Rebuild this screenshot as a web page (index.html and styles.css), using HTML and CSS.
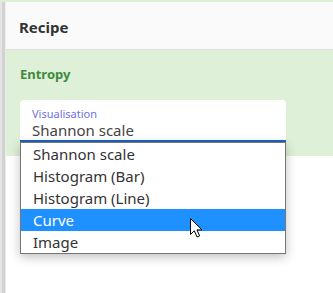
FILE: index.html
```html
<!DOCTYPE html>
<html lang="en">
<head>
    <meta charset="UTF-8">
    <title>Recipe</title>
    <link rel="stylesheet" href="styles.css">
</head>
<body>
    <div class="topbar"></div>
    <div class="app">
        <div class="gutter"></div>
        <div class="main">
            <div class="header">Recipe</div>
            <div class="operation">
                <div class="op-title">Entropy</div>
                <div class="field">
                    <label class="field-label">Visualisation</label>
                    <div class="field-value">Shannon scale</div>
                    <ul class="options">
                        <li>Shannon scale</li>
                        <li>Histogram (Bar)</li>
                        <li>Histogram (Line)</li>
                        <li class="active">Curve</li>
                        <li>Image</li>
                    </ul>
                    <svg class="cursor" width="14" height="21" viewBox="0 0 14 21">
                        <path d="M0.5 0.5 L0.5 16.5 L4.3 12.8 L7 19 L9.6 17.9 L7 11.9 L12 11.9 Z" fill="#fff" stroke="#000" stroke-width="1" stroke-linejoin="miter"/>
                    </svg>
                </div>
            </div>
            <div class="rest"></div>
        </div>
    </div>
</body>
</html>
```
FILE: styles.css
```css
body {
    margin: 0;
    font-family: "Noto Sans", "Open Sans", sans-serif;
    background-color: #fff;
    color: #333;
}
.topbar {
    height: 2px;
    background-color: #dcefd6;
}
.app {
    display: flex;
    height: 291px;
}
.gutter {
    width: 6px;
    background: linear-gradient(to right, #e4e4e4 0, #e4e4e4 2px, #d2d2d2 2px, #d2d2d2 5px, #ececec 5px);
}
.main {
    flex: 1;
    display: flex;
    flex-direction: column;
}
.header {
    height: 48px;
    line-height: 46px;
    padding-top: 2px;
    padding-left: 13px;
    box-sizing: border-box;
    background-color: #fafafa;
    border-bottom: 1px solid #ddd;
    font-weight: bold;
    font-size: 15px;
    color: #333;
}
.operation {
    background-color: #dff0d8;
    height: 106px;
    padding-left: 14px;
}
.op-title {
    font-weight: bold;
    font-size: 13px;
    color: #3d8b3d;
    padding-top: 15px;
    height: 34px;
    box-sizing: border-box;
}
.field {
    position: relative;
    width: 266px;
    height: 42px;
    margin-top: 16px;
    box-sizing: border-box;
    background-color: #fff;
    border-radius: 4px 4px 0 0;
    border-bottom: 2px solid #1b63c1;
    padding: 7px 0 0 12px;
    box-shadow: 0 3px 4px -3px rgba(0, 0, 0, 0.15);
}
.field-label {
    display: block;
    font-size: 11px;
    line-height: 13px;
    color: #6f72e2;
}
.field-value {
    font-size: 15px;
    line-height: 20px;
    color: #444;
}
.options {
    position: absolute;
    top: 42px;
    left: 0;
    width: 266px;
    box-sizing: border-box;
    margin: 0;
    padding: 0;
    list-style: none;
    background-color: #fff;
    border: 1px solid #767676;
    box-shadow: 0 3px 10px rgba(0, 0, 0, 0.25);
}
.options li {
    height: 22px;
    line-height: 22px;
    padding-left: 12px;
    font-size: 15px;
    color: #333;
}
.options li.active {
    background-color: #1e90ff;
    color: #fff;
}
.cursor {
    position: absolute;
    left: 170px;
    top: 118px;
}
.rest {
    flex: 1;
    background-color: #fff;
}
```
